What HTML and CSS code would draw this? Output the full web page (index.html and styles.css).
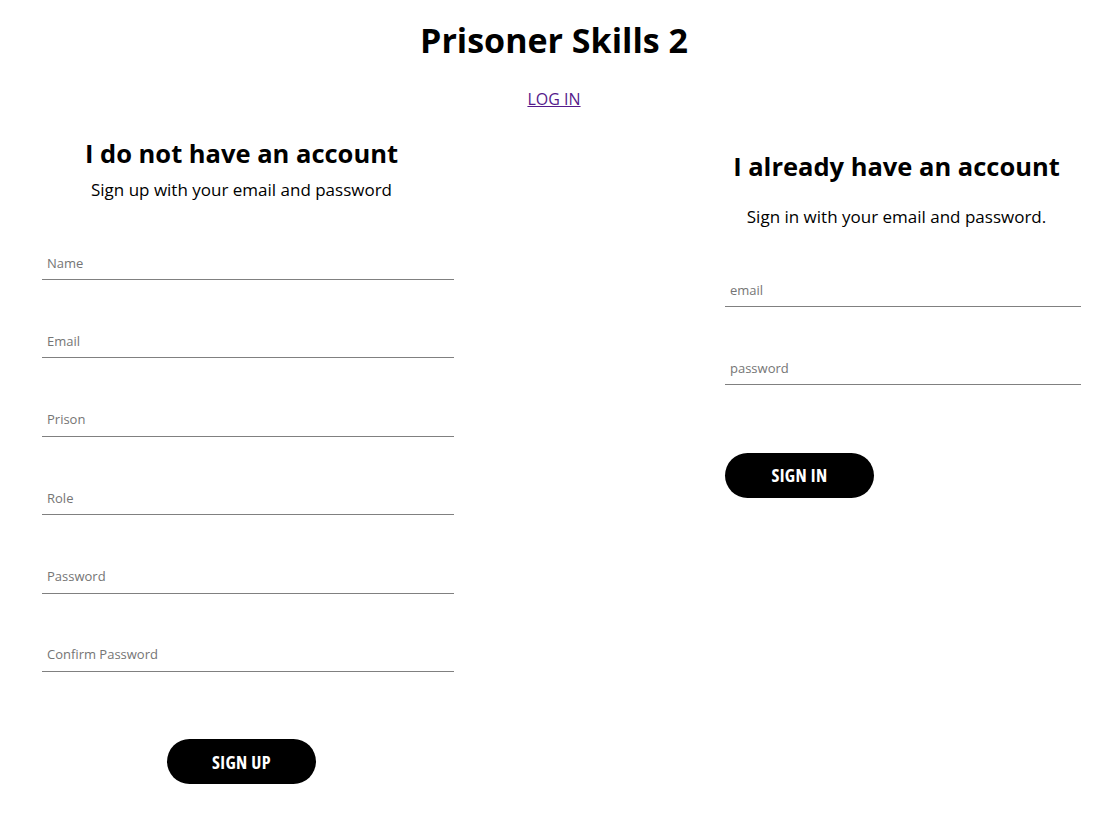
FILE: index.html
```html
<!DOCTYPE html>
<html lang="en">
<head>
<meta charset="utf-8">
<title>Prisoner Skills 2</title>
<link rel="stylesheet" href="styles.css">
</head>
<body>
<header class="top">
  <h1 class="title">Prisoner Skills 2</h1>
  <a class="login-link" href="#">LOG IN</a>
</header>
<main class="auth">
  <section class="col col-left">
    <h2 class="col-title">I do not have an account</h2>
    <p class="col-sub">Sign up with your email and password</p>
    <form class="form form-left">
      <input class="field" type="text" placeholder="Name">
      <input class="field" type="email" placeholder="Email">
      <input class="field" type="text" placeholder="Prison">
      <input class="field" type="text" placeholder="Role">
      <input class="field" type="password" placeholder="Password">
      <input class="field" type="password" placeholder="Confirm Password">
      <button class="btn" type="button">SIGN UP</button>
    </form>
  </section>
  <section class="col col-right">
    <h2 class="col-title col-title-right">I already have an account</h2>
    <p class="col-sub col-sub-right">Sign in with your email and password.</p>
    <form class="form form-right">
      <input class="field" type="email" placeholder="email">
      <input class="field" type="password" placeholder="password">
      <button class="btn" type="button">SIGN IN</button>
    </form>
  </section>
</main>
</body>
</html>
```

FILE: styles.css
```css
* { box-sizing: border-box; }

body {
  margin: 0;
  font-family: "Open Sans", "Noto Sans", sans-serif;
  color: #000;
  background: #fff;
}

.top {
  display: flex;
  flex-direction: column;
  align-items: center;
  padding-right: 8px;
}

.title {
  margin: 18px 0 0;
  font-size: 34px;
  line-height: 44px;
  font-weight: 700;
}

.login-link {
  margin-top: 26px;
  font-size: 16px;
  line-height: 22px;
  color: #551a8b;
}

.auth {
  display: flex;
  margin-top: 26px;
}

.col {
  display: flex;
  flex-direction: column;
}

.col-left { width: 483px; }
.col-right { width: 423px; margin-left: auto; margin-right: 8px; }

.col-title {
  margin: 0;
  text-align: center;
  font-size: 25.5px;
  line-height: 34px;
  font-weight: 700;
}

.col-title-right { margin-top: 13px; }

.col-sub {
  margin: 8px 0 0;
  text-align: center;
  font-size: 17px;
  line-height: 24px;
}

.col-sub-right { margin-top: 22px; }

.form {
  display: flex;
  flex-direction: column;
  align-items: flex-start;
  gap: 44.4px;
  padding-top: 44px;
}

.form-left { padding-left: 42px; width: 454px; }
.form-right { padding-left: 40px; width: 396px; }

.field {
  display: block;
  width: 100%;
  height: 34px;
  padding: 0 5px;
  border: none;
  border-bottom: 1px solid #808080;
  font-family: inherit;
  font-size: 13px;
  color: #000;
  background: none;
  outline: none;
}

.field::placeholder { color: #757575; }

.btn {
  width: 149px;
  height: 45px;
  margin-top: 23px;
  border: none;
  border-radius: 23px;
  background: #000;
  color: #fff;
  font-family: "Open Sans", sans-serif;
  font-stretch: 75%;
  font-weight: 700;
  font-size: 18px;
  letter-spacing: 0.4px;
  cursor: pointer;
}

.form-left .btn { margin-left: 125px; }
```
